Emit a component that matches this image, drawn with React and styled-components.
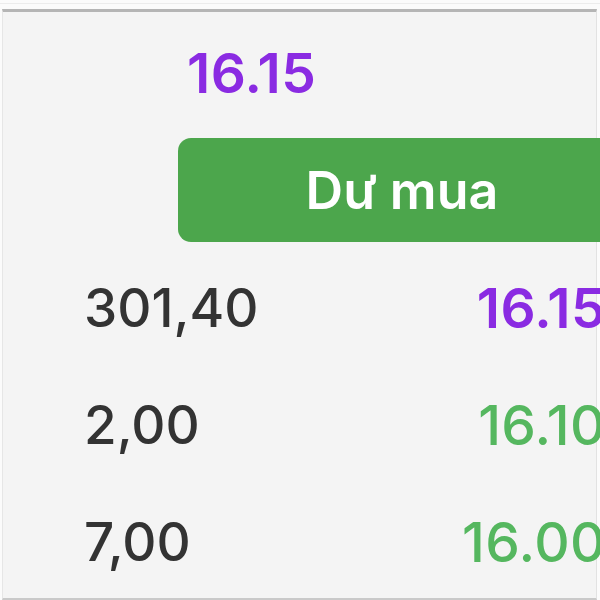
import React from 'react';
import styled, { createGlobalStyle } from 'styled-components';

const GlobalStyle = createGlobalStyle`
    html, body {
        margin: 0;
        padding: 0;
        width: 600px;
        height: 600px;
        overflow: hidden;
        background: #fbfbfb;
        font-family: Inter, "Liberation Sans", sans-serif;
    }
`;

const Page = styled.div`
    width: 600px;
    height: 600px;
    padding-top: 9px;
    box-sizing: border-box;
    background: linear-gradient(#fbfbfb 0 3px, #ececec 3px 4px, #fbfbfb 4px);
`;

const Panel = styled.div`
    margin: 0 3px 0 2px;
    height: 591px;
    box-sizing: border-box;
    background: #f4f4f4;
    border-top: 3px solid #b5b5b5;
    border-left: 1px solid #e6e6e6;
    border-right: 1px solid #e2e2e2;
    border-bottom: 2px solid #c9c9c9;
`;

const Header = styled.div`
    height: 126px;
    display: flex;
    align-items: center;
    padding-left: 184px;
    padding-bottom: 5px;
    box-sizing: border-box;
`;

const Price = styled.span`
    font-size: 55px;
    font-weight: ${p => (p.$strong ? 600 : 500)};
    color: ${p => p.$color};
    letter-spacing: 0.4px;
`;

const Button = styled.div`
    margin-left: 175px;
    width: 448px;
    height: 104px;
    border-radius: 13px;
    background: #4ca64c;
    display: flex;
    align-items: center;
    justify-content: center;
    color: #fff;
    font-size: 52px;
    font-weight: 600;
    margin-bottom: 7px;
`;

const Row = styled.div`
    height: 117px;
    display: grid;
    grid-template-columns: 360px 162px;
    align-items: center;
    padding-left: 81px;
`;

const Volume = styled.span`
    font-size: 53px;
    font-weight: 500;
    color: #333333;
`;

const RightPrice = styled.span`
    text-align: right;
    white-space: nowrap;
`;

const rows = [
    { vol: '301,40', price: '16.15', color: '#8a2be2', strong: true },
    { vol: '2,00', price: '16.10', color: '#55b75f' },
    { vol: '7,00', price: '16.00', color: '#55b75f' },
];

export default function App() {
    return (
        <>
            <GlobalStyle />
            <Page>
                <Panel>
                    <Header>
                        <Price $color="#8a2be2" $strong>16.15</Price>
                    </Header>
                    <Button>Dư mua</Button>
                    {rows.map(r => (
                        <Row key={r.vol}>
                            <Volume>{r.vol}</Volume>
                            <RightPrice>
                                <Price $color={r.color} $strong={r.strong}>{r.price}</Price>
                            </RightPrice>
                        </Row>
                    ))}
                </Panel>
            </Page>
        </>
    );
}
